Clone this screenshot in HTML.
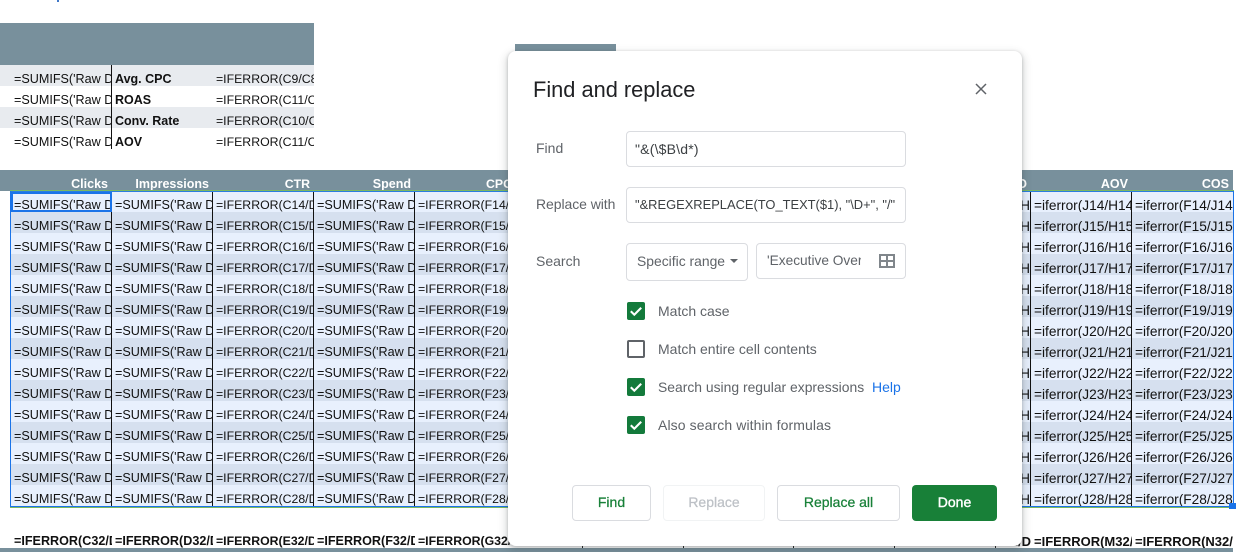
<!DOCTYPE html>
<html><head><meta charset="utf-8"><style>
html,body{margin:0;padding:0;background:#fff}
body{width:1245px;height:552px;position:relative;overflow:hidden;font-family:"Liberation Sans",sans-serif;color:#111}
div,span,a{box-sizing:border-box}
.a{position:absolute}
.r{position:absolute;height:21px;font-size:12.6px;line-height:29px;white-space:nowrap}
.r span{position:absolute;top:0;height:22px;overflow:hidden;padding-left:3px;width:101px}
.r span:nth-child(1){left:0}.r span:nth-child(2){left:101px}.r span:nth-child(3){left:202px}.r span:nth-child(4){left:303px}.r span:nth-child(5){left:404px}
.l{left:11px;width:505px}
.l span{border-right:1px solid #111;height:21px}
.l span:nth-child(3),.l span:nth-child(5){font-size:12.3px}
.l span:nth-child(5){border-right:0}
.g{left:930px;width:303px;font-size:13.7px}
.g span{border-right:1px solid #111;height:21px}
.g span:nth-child(1){text-align:right;padding:0}
.g span:nth-child(3){border-right:0}
.o{background:#e8f0fd}.e{background:#d6e0ef}
.h{font-weight:700;font-size:12.5px;color:#fff;text-align:right}
.h span{padding:0 4px 0 0!important;border:0!important}
.t{font-weight:700}.t span{border:0!important}
.lab{position:absolute;font-size:14px;color:#5f6368;line-height:20px;white-space:nowrap}
.inp{position:absolute;border:1px solid #dadce0;border-radius:4px;background:#fff;font-size:14px;color:#3c4043;line-height:34px;padding-left:8px;white-space:nowrap;overflow:hidden}
.cb{position:absolute;left:627px;width:18px;height:18px;border-radius:2px;background:#137a3b}
.btn{position:absolute;top:485px;height:36px;border:1px solid #dadce0;border-radius:4px;text-align:center;line-height:32px;font-size:14px;color:#188038;background:#fff;-webkit-text-stroke:.25px currentColor}
.tick{position:absolute;top:546px;width:1px;height:2px;background:#222}
</style></head><body>
<div class="a" style="left:57px;top:0;width:2px;height:2px;background:#3f78c8"></div>
<div class="a" style="left:0;top:23px;width:314px;height:42px;background:#78909c"></div>
<div class="a" style="left:515px;top:44px;width:101px;height:10px;background:#78909c"></div>

<div class="a" style="left:0;top:65px;width:314px;height:21px;background:#e8ebef"></div>
<div class="a" style="left:0;top:107px;width:314px;height:21px;background:#e8ebef"></div>
<div class="r" style="left:11px;top:65px;width:303px"><span style="border-right:1px solid #111;height:21px">=SUMIFS('Raw Data'!</span><span style="font-size:12.5px"><b>Avg. CPC</b></span><span style="font-size:12.3px">=IFERROR(C9/C8,0)</span></div>
<div class="r" style="left:11px;top:86px;width:303px"><span style="border-right:1px solid #111;height:21px">=SUMIFS('Raw Data'!</span><span style="font-size:12.5px"><b>ROAS</b></span><span style="font-size:12.3px">=IFERROR(C11/C8,0)</span></div>
<div class="r" style="left:11px;top:107px;width:303px"><span style="border-right:1px solid #111;height:21px">=SUMIFS('Raw Data'!</span><span style="font-size:12.5px"><b>Conv. Rate</b></span><span style="font-size:12.3px">=IFERROR(C10/C8,0)</span></div>
<div class="r" style="left:11px;top:128px;width:303px"><span style="border-right:1px solid #111;height:21px">=SUMIFS('Raw Data'!</span><span style="font-size:12.5px"><b>AOV</b></span><span style="font-size:12.3px">=IFERROR(C11/C8,0)</span></div>

<div class="a" style="left:0;top:170px;width:1233px;height:21px;background:#78909c"></div>
<div class="r h l" style="top:170px"><span>Clicks</span><span>Impressions</span><span>CTR</span><span>Spend</span><span>CPC</span></div>
<div class="r h g" style="top:170px;font-size:12.5px"><span>CPO</span><span>AOV</span><span>COS</span></div>

<div class="a o" style="left:11px;top:191px;width:1222px;height:315px"></div>
<div class="a e" style="left:11px;top:212px;width:1222px;height:21px"></div>
<div class="a e" style="left:11px;top:254px;width:1222px;height:21px"></div>
<div class="a e" style="left:11px;top:296px;width:1222px;height:21px"></div>
<div class="a e" style="left:11px;top:338px;width:1222px;height:21px"></div>
<div class="a e" style="left:11px;top:380px;width:1222px;height:21px"></div>
<div class="a e" style="left:11px;top:422px;width:1222px;height:21px"></div>
<div class="a e" style="left:11px;top:464px;width:1222px;height:21px"></div>

<div class="r l" style="top:191px"><span>=SUMIFS('Raw Data'!</span><span>=SUMIFS('Raw Data'!</span><span>=IFERROR(C14/D14,0)</span><span>=SUMIFS('Raw Data'!</span><span>=IFERROR(F14/C14,0)</span></div>
<div class="r l" style="top:212px"><span>=SUMIFS('Raw Data'!</span><span>=SUMIFS('Raw Data'!</span><span>=IFERROR(C15/D15,0)</span><span>=SUMIFS('Raw Data'!</span><span>=IFERROR(F15/C15,0)</span></div>
<div class="r l" style="top:233px"><span>=SUMIFS('Raw Data'!</span><span>=SUMIFS('Raw Data'!</span><span>=IFERROR(C16/D16,0)</span><span>=SUMIFS('Raw Data'!</span><span>=IFERROR(F16/C16,0)</span></div>
<div class="r l" style="top:254px"><span>=SUMIFS('Raw Data'!</span><span>=SUMIFS('Raw Data'!</span><span>=IFERROR(C17/D17,0)</span><span>=SUMIFS('Raw Data'!</span><span>=IFERROR(F17/C17,0)</span></div>
<div class="r l" style="top:275px"><span>=SUMIFS('Raw Data'!</span><span>=SUMIFS('Raw Data'!</span><span>=IFERROR(C18/D18,0)</span><span>=SUMIFS('Raw Data'!</span><span>=IFERROR(F18/C18,0)</span></div>
<div class="r l" style="top:296px"><span>=SUMIFS('Raw Data'!</span><span>=SUMIFS('Raw Data'!</span><span>=IFERROR(C19/D19,0)</span><span>=SUMIFS('Raw Data'!</span><span>=IFERROR(F19/C19,0)</span></div>
<div class="r l" style="top:317px"><span>=SUMIFS('Raw Data'!</span><span>=SUMIFS('Raw Data'!</span><span>=IFERROR(C20/D20,0)</span><span>=SUMIFS('Raw Data'!</span><span>=IFERROR(F20/C20,0)</span></div>
<div class="r l" style="top:338px"><span>=SUMIFS('Raw Data'!</span><span>=SUMIFS('Raw Data'!</span><span>=IFERROR(C21/D21,0)</span><span>=SUMIFS('Raw Data'!</span><span>=IFERROR(F21/C21,0)</span></div>
<div class="r l" style="top:359px"><span>=SUMIFS('Raw Data'!</span><span>=SUMIFS('Raw Data'!</span><span>=IFERROR(C22/D22,0)</span><span>=SUMIFS('Raw Data'!</span><span>=IFERROR(F22/C22,0)</span></div>
<div class="r l" style="top:380px"><span>=SUMIFS('Raw Data'!</span><span>=SUMIFS('Raw Data'!</span><span>=IFERROR(C23/D23,0)</span><span>=SUMIFS('Raw Data'!</span><span>=IFERROR(F23/C23,0)</span></div>
<div class="r l" style="top:401px"><span>=SUMIFS('Raw Data'!</span><span>=SUMIFS('Raw Data'!</span><span>=IFERROR(C24/D24,0)</span><span>=SUMIFS('Raw Data'!</span><span>=IFERROR(F24/C24,0)</span></div>
<div class="r l" style="top:422px"><span>=SUMIFS('Raw Data'!</span><span>=SUMIFS('Raw Data'!</span><span>=IFERROR(C25/D25,0)</span><span>=SUMIFS('Raw Data'!</span><span>=IFERROR(F25/C25,0)</span></div>
<div class="r l" style="top:443px"><span>=SUMIFS('Raw Data'!</span><span>=SUMIFS('Raw Data'!</span><span>=IFERROR(C26/D26,0)</span><span>=SUMIFS('Raw Data'!</span><span>=IFERROR(F26/C26,0)</span></div>
<div class="r l" style="top:464px"><span>=SUMIFS('Raw Data'!</span><span>=SUMIFS('Raw Data'!</span><span>=IFERROR(C27/D27,0)</span><span>=SUMIFS('Raw Data'!</span><span>=IFERROR(F27/C27,0)</span></div>
<div class="r l" style="top:485px"><span>=SUMIFS('Raw Data'!</span><span>=SUMIFS('Raw Data'!</span><span>=IFERROR(C28/D28,0)</span><span>=SUMIFS('Raw Data'!</span><span>=IFERROR(F28/C28,0)</span></div>

<div class="r g" style="top:191px"><span>J14/H</span><span>=iferror(J14/H14,0)</span><span>=iferror(F14/J14,0)</span></div>
<div class="r g" style="top:212px"><span>J15/H</span><span>=iferror(J15/H15,0)</span><span>=iferror(F15/J15,0)</span></div>
<div class="r g" style="top:233px"><span>J16/H</span><span>=iferror(J16/H16,0)</span><span>=iferror(F16/J16,0)</span></div>
<div class="r g" style="top:254px"><span>J17/H</span><span>=iferror(J17/H17,0)</span><span>=iferror(F17/J17,0)</span></div>
<div class="r g" style="top:275px"><span>J18/H</span><span>=iferror(J18/H18,0)</span><span>=iferror(F18/J18,0)</span></div>
<div class="r g" style="top:296px"><span>J19/H</span><span>=iferror(J19/H19,0)</span><span>=iferror(F19/J19,0)</span></div>
<div class="r g" style="top:317px"><span>J20/H</span><span>=iferror(J20/H20,0)</span><span>=iferror(F20/J20,0)</span></div>
<div class="r g" style="top:338px"><span>J21/H</span><span>=iferror(J21/H21,0)</span><span>=iferror(F21/J21,0)</span></div>
<div class="r g" style="top:359px"><span>J22/H</span><span>=iferror(J22/H22,0)</span><span>=iferror(F22/J22,0)</span></div>
<div class="r g" style="top:380px"><span>J23/H</span><span>=iferror(J23/H23,0)</span><span>=iferror(F23/J23,0)</span></div>
<div class="r g" style="top:401px"><span>J24/H</span><span>=iferror(J24/H24,0)</span><span>=iferror(F24/J24,0)</span></div>
<div class="r g" style="top:422px"><span>J25/H</span><span>=iferror(J25/H25,0)</span><span>=iferror(F25/J25,0)</span></div>
<div class="r g" style="top:443px"><span>J26/H</span><span>=iferror(J26/H26,0)</span><span>=iferror(F26/J26,0)</span></div>
<div class="r g" style="top:464px"><span>J27/H</span><span>=iferror(J27/H27,0)</span><span>=iferror(F27/J27,0)</span></div>
<div class="r g" style="top:485px"><span>J28/H</span><span>=iferror(J28/H28,0)</span><span>=iferror(F28/J28,0)</span></div>

<div class="a" style="left:10px;top:190px;width:1224px;height:1px;background:#7cb862"></div>
<div class="a" style="left:10px;top:191px;width:1224px;height:1px;background:#2a7de1"></div>
<div class="a" style="left:10px;top:506px;width:1224px;height:1px;background:#1a73e8"></div>
<div class="a" style="left:10px;top:507px;width:1224px;height:1px;background:#7cb862"></div>
<div class="a" style="left:10px;top:191px;width:1px;height:316px;background:#1a73e8"></div>
<div class="a" style="left:1233px;top:191px;width:1px;height:316px;background:#1a73e8"></div>
<div class="a" style="left:11px;top:192px;width:101px;height:20px;border:2px solid #1a73e8"></div>
<div class="a" style="left:1229px;top:503px;width:7px;height:6px;background:#1a73e8"></div>

<div class="r t l" style="top:527px"><span>=IFERROR(C32/D32,0)</span><span>=IFERROR(D32/D32,0)</span><span>=IFERROR(E32/D32,0)</span><span>=IFERROR(F32/D32,0)</span><span>=IFERROR(G32/D32,0)</span></div>
<div class="r t g" style="top:527px;font-size:13px"><span>L32/D</span><span>=IFERROR(M32/D32,0)</span><span>=IFERROR(N32/D32,0)</span></div>
<div class="a" style="left:0;top:548px;width:1233px;height:4px;background:#78909c"></div>
<div class="tick" style="left:582px"></div><div class="tick" style="left:683px"></div><div class="tick" style="left:793px"></div><div class="tick" style="left:894px"></div><div class="tick" style="left:995px"></div>

<div class="a" style="left:508px;top:51px;width:514px;height:495px;background:#fff;border-radius:8px;box-shadow:0 4px 8px 3px rgba(60,64,67,.15),0 1px 3px rgba(60,64,67,.3)"></div>

<div class="a" style="left:533px;top:76px;font-size:21.8px;line-height:28px;color:#202124;white-space:nowrap">Find and replace</div>
<svg class="a" style="left:974px;top:82px" width="14" height="14" viewBox="0 0 14 14"><path d="M2 2L12 12M12 2L2 12" stroke="#5f6368" stroke-width="1.5" fill="none"/></svg>

<div class="lab" style="left:536px;top:138px">Find</div>
<div class="inp" style="left:626px;top:131px;width:280px;height:36px;letter-spacing:.2px">"&amp;(\$B\d*)</div>
<div class="lab" style="left:536px;top:194px;letter-spacing:-.07px">Replace with</div>
<div class="inp" style="left:626px;top:187px;width:280px;height:36px;font-size:12.9px">"&amp;REGEXREPLACE(TO_TEXT($1), "\D+", "/"</div>
<div class="lab" style="left:536px;top:251px">Search</div>
<div class="inp" style="left:626px;top:243px;width:122px;height:38px;padding-left:10px;line-height:35px;color:#5f6368;font-size:13.9px">Specific range</div>
<svg class="a" style="left:730px;top:259px" width="9" height="5" viewBox="0 0 9 5"><path d="M0 0H8L4 4Z" fill="#5f6368"/></svg>
<div class="inp" style="left:756px;top:243px;width:150px;height:36px;padding-left:0;color:#5f6368"><span class="a" style="left:10px;top:0;width:94px;overflow:hidden;font-size:13.7px">'Executive Overview'</span></div>
<svg class="a" style="left:878px;top:253px" width="18" height="15" viewBox="0 0 18 15"><path d="M2 2H16V14H2ZM9 2V14M2 8H16" fill="none" stroke="#80868b" stroke-width="2"/></svg>

<div class="cb" style="top:302px"></div>
<svg class="a" style="left:627px;top:302px" width="18" height="18" viewBox="0 0 18 18"><path d="M3.8 9.2L7.3 12.7L14.2 5.8" fill="none" stroke="#fff" stroke-width="2.1"/></svg>
<div class="lab" style="left:658px;top:301px">Match case</div>
<div class="a" style="left:627px;top:340px;width:18px;height:18px;border:2px solid #5f6368;border-radius:2px;background:#fff"></div>
<div class="lab" style="left:658px;top:339px">Match entire cell contents</div>
<div class="cb" style="top:378px"></div>
<svg class="a" style="left:627px;top:378px" width="18" height="18" viewBox="0 0 18 18"><path d="M3.8 9.2L7.3 12.7L14.2 5.8" fill="none" stroke="#fff" stroke-width="2.1"/></svg>
<div class="lab" style="left:658px;top:377px;font-size:13.9px">Search using regular expressions</div>
<div class="lab" style="left:872px;top:377px;color:#1a73e8">Help</div>
<div class="cb" style="top:416px"></div>
<svg class="a" style="left:627px;top:416px" width="18" height="18" viewBox="0 0 18 18"><path d="M3.8 9.2L7.3 12.7L14.2 5.8" fill="none" stroke="#fff" stroke-width="2.1"/></svg>
<div class="lab" style="left:658px;top:415px;letter-spacing:.1px">Also search within formulas</div>

<div class="btn" style="left:572px;width:79px">Find</div>
<div class="btn" style="left:663px;width:102px;border-color:#f1f3f4;color:#bdc1c6">Replace</div>
<div class="btn" style="left:777px;width:123px">Replace all</div>
<div class="btn" style="left:912px;width:85px;border:0;background:#188038;color:#fff;line-height:34px;-webkit-text-stroke:.4px #fff">Done</div>
</body></html>
